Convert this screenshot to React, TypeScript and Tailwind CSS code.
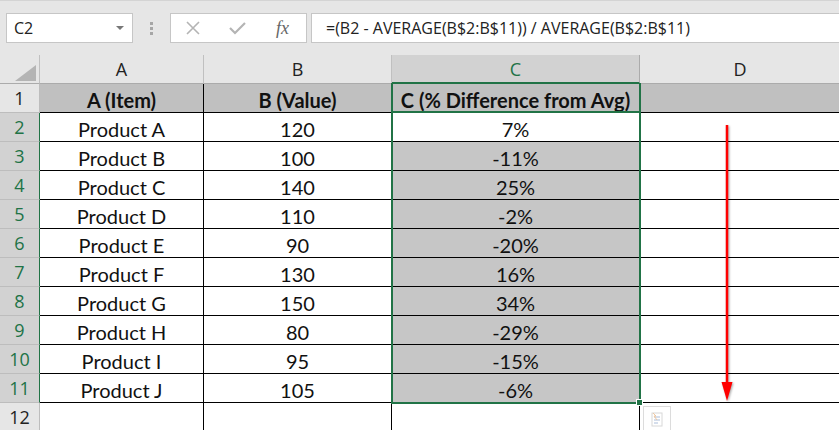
import React from "react";

const rows = [
    ["Product A", "120", "7%"],
    ["Product B", "100", "-11%"],
    ["Product C", "140", "25%"],
    ["Product D", "110", "-2%"],
    ["Product E", "90", "-20%"],
    ["Product F", "130", "16%"],
    ["Product G", "150", "34%"],
    ["Product H", "80", "-29%"],
    ["Product I", "95", "-15%"],
    ["Product J", "105", "-6%"],
];

function Cell({ children, fill }: { children?: React.ReactNode; fill: string }) {
    return (
        <div className="h-[29px] overflow-hidden leading-none flex items-center justify-center pt-[3px] border-solid border-0 border-r border-b border-r-black border-b-black" style={{ background: fill }}>
            {children}
        </div>
    );
}

export default function App() {
    return (
        <div className="relative w-[839px] h-[430px] overflow-hidden bg-[#e6e6e6] [font-family:Lato,sans-serif] text-[#111]">
            {/* Formula bar strip */}
            <div className="h-[55px] border-t border-[#d4d4d4] flex items-start pt-[12px] pl-[6px]">
                <div className="w-[127px] h-[30px] bg-white border border-[#c6c6c6] flex items-center justify-between pl-[7px] pr-[8px] [font-family:'Open_Sans',sans-serif] text-[16px] text-[#222]">
                    <span>C2</span>
                    <span className="w-0 h-0 border-l-[4px] border-r-[4px] border-t-[4px] border-l-transparent border-r-transparent border-t-[#777]" />
                </div>
                <div className="w-[37px] h-[30px] flex flex-col items-center justify-center gap-[2px]">
                    <span className="w-[3px] h-[3px] bg-[#a6a6a6]" />
                    <span className="w-[3px] h-[3px] bg-[#a6a6a6]" />
                    <span className="w-[3px] h-[3px] bg-[#a6a6a6]" />
                </div>
                <div className="w-[137px] h-[30px] bg-white border border-[#c6c6c6] flex items-center pl-[14px] gap-[28px]">
                    <svg width="16" height="14" viewBox="0 0 16 14">
                        <path d="M2 1 L14 13 M14 1 L2 13" stroke="#b4b4b4" strokeWidth="1.6" fill="none" />
                    </svg>
                    <svg width="17" height="13" viewBox="0 0 17 13">
                        <path d="M1 6 L6 11 L16 1" stroke="#b4b4b4" strokeWidth="2.2" fill="none" />
                    </svg>
                    <span className="[font-family:'Liberation_Serif',serif] italic text-[18px] text-[#666] leading-none ml-[2px]">fx</span>
                </div>
                <div className="flex-1 ml-[4px] h-[30px] bg-white border border-[#c6c6c6] border-r-0 flex items-center pl-[14px] [font-family:'Open_Sans',sans-serif] text-[16px] text-[#222]">
                    =(B2 - AVERAGE(B$2:B$11)) / AVERAGE(B$2:B$11)
                </div>
            </div>

            {/* Column headers */}
            <div className="grid grid-cols-[40px_164px_188px_248px_200px] grid-rows-[29px] h-[29px] leading-none [font-family:'Open_Sans',sans-serif] text-[18px] text-[#222]">
                <div className="relative border-solid border-0 border-r border-b border-r-[#c0c0c0] border-b-[#ababab]">
                    <svg className="absolute left-[15px] top-[10px]" width="22" height="16" viewBox="0 0 22 16">
                        <polygon points="21,0 21,16 0,16" fill="#b4b4b4" />
                    </svg>
                </div>
                <div className="flex items-center justify-center border-solid border-0 border-r border-b border-r-[#c0c0c0] border-b-[#ababab]">A</div>
                <div className="flex items-center justify-center border-solid border-0 border-r border-b border-r-[#c0c0c0] border-b-[#ababab]">B</div>
                <div className="flex items-center justify-center bg-[#d2d2d2] text-[#217346] border-solid border-0 border-r border-b-2 border-r-[#ababab] border-b-[#217346] pt-[1px]">C</div>
                <div className="flex items-center justify-center border-solid border-0 border-b border-b-[#ababab]">D</div>
            </div>

            {/* Row 1 */}
            <div className="grid grid-cols-[40px_164px_188px_248px_200px] grid-rows-[29px] h-[29px] text-[20px] font-bold">
                <div className="h-[29px] leading-none flex items-center justify-center border-solid border-0 border-r border-b border-r-[#bdbdbd] border-b-[#bdbdbd] [font-family:'Open_Sans',sans-serif] text-[18px] font-normal text-[#222]">1</div>
                <Cell fill="#c0c0c0">A (Item)</Cell>
                <Cell fill="#c0c0c0">B (Value)</Cell>
                <Cell fill="#c0c0c0">C (% Difference from Avg)</Cell>
                <Cell fill="#c0c0c0" />
            </div>

            {rows.map((r, i) => (
                <div key={i} className="grid grid-cols-[40px_164px_188px_248px_200px] grid-rows-[29px] h-[29px] text-[20px]">
                    <div className="h-[29px] leading-none flex items-center justify-center bg-[#d2d2d2] text-[#217346] border-solid border-0 border-r border-b border-r-[#217346] border-b-[#bdbdbd] [font-family:'Open_Sans',sans-serif] text-[18px]">{i + 2}</div>
                    <Cell fill="#ffffff">{r[0]}</Cell>
                    <Cell fill="#ffffff">{r[1]}</Cell>
                    <Cell fill={i === 0 ? "#ffffff" : "#c6c6c6"}>{r[2]}</Cell>
                    <Cell fill="#ffffff" />
                </div>
            ))}

            {/* Row 12 */}
            <div className="grid grid-cols-[40px_164px_188px_248px_200px] h-[28px]">
                <div className="leading-none flex items-center justify-center border-solid border-0 border-r border-r-[#bdbdbd] [font-family:'Open_Sans',sans-serif] text-[18px] text-[#222]">12</div>
                <div className="bg-white border-solid border-0 border-r border-r-black" />
                <div className="bg-white border-solid border-0 border-r border-r-black" />
                <div className="bg-white border-solid border-0 border-r border-r-black" />
                <div className="bg-white" />
            </div>

            {/* Selection borders */}
            <div className="absolute left-[391px] top-[83px] w-[250px] h-[29px] border-solid border-0 border-x-2 border-[#217346]" />
            <div className="absolute left-[391px] top-[111px] w-[250px] h-[293px] border-solid border-2 border-[#217346]" />
            <div className="absolute left-[636px] top-[399px] w-[7px] h-[7px] bg-[#217346] border border-white" />

            {/* Paste options */}
            <div className="absolute left-[643px] top-[406px] w-[28px] h-[26px] bg-white border border-[#dcdcdc] flex items-center justify-center">
                <svg width="16" height="16" viewBox="0 0 16 16">
                    <rect x="3" y="2" width="10" height="13" fill="none" stroke="#d8d8d8" strokeWidth="1" />
                    <path d="M5 6 H11 M5 9 H11 M5 12 H9" stroke="#c8d4e6" strokeWidth="1.5" />
                    <path d="M4 2 L7 5 L5 5 L8 9" stroke="#f0c8a0" strokeWidth="1" fill="none" />
                </svg>
            </div>

            {/* Red arrow */}
            <svg className="absolute left-[718px] top-[120px] drop-shadow-[1px_1px_1px_rgba(0,0,0,0.35)]" width="20" height="285" viewBox="0 0 20 285">
                <line x1="9" y1="5" x2="9" y2="265" stroke="#ff0000" strokeWidth="2.5" />
                <polygon points="3.5,262 14.5,262 9,281" fill="#ff0000" />
            </svg>
        </div>
    );
}
